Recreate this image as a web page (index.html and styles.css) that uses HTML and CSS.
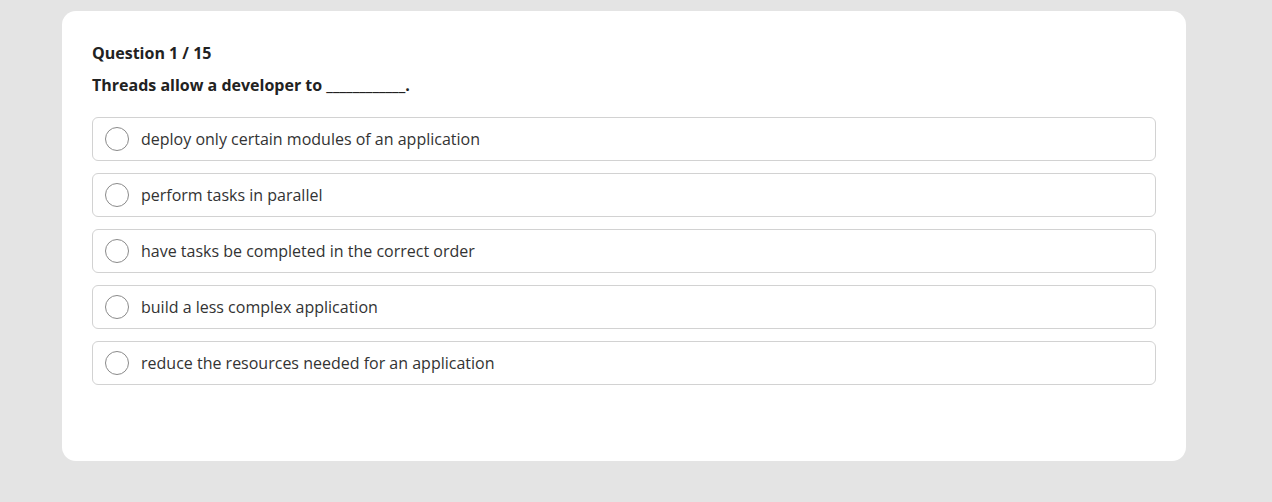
FILE: index.html
```html
<!DOCTYPE html>
<html>
<head>
<meta charset="utf-8">
<link rel="stylesheet" href="styles.css">
</head>
<body>
<div class="card">
  <div class="counter">Question 1 / 15</div>
  <div class="question">Threads allow a developer to ____________.</div>
  <div class="options">
    <label class="option"><span class="radio"></span><span class="text">deploy only certain modules of an application</span></label>
    <label class="option"><span class="radio"></span><span class="text">perform tasks in parallel</span></label>
    <label class="option"><span class="radio"></span><span class="text">have tasks be completed in the correct order</span></label>
    <label class="option"><span class="radio"></span><span class="text">build a less complex application</span></label>
    <label class="option"><span class="radio"></span><span class="text">reduce the resources needed for an application</span></label>
  </div>
</div>
</body>
</html>
```
FILE: styles.css
```css
html, body {
  margin: 0;
  padding: 0;
}
body {
  background: #e4e4e4;
  font-family: "Open Sans", "Liberation Sans", sans-serif;
  color: #333;
  padding: 11px 86px 0 62px;
  height: 502px;
  box-sizing: border-box;
}
.card {
  background: #fff;
  border-radius: 14px;
  height: 450px;
  box-sizing: border-box;
  padding: 31px 30px;
}
.counter {
  font-size: 16px;
  font-weight: 700;
  line-height: 22px;
  color: #222;
}
.question {
  font-size: 16px;
  font-weight: 700;
  line-height: 22px;
  color: #222;
  margin-top: 10px;
}
.options {
  display: flex;
  flex-direction: column;
  gap: 12px;
  margin-top: 21px;
}
.option {
  display: flex;
  align-items: center;
  height: 44px;
  box-sizing: border-box;
  border: 1px solid #d2d2d2;
  border-radius: 6px;
  padding-left: 12px;
}
.radio {
  width: 24px;
  height: 24px;
  box-sizing: border-box;
  border: 1px solid #8a8a8a;
  border-radius: 50%;
  flex: none;
}
.text {
  margin-left: 12px;
  font-size: 16px;
  color: #333;
}
```
